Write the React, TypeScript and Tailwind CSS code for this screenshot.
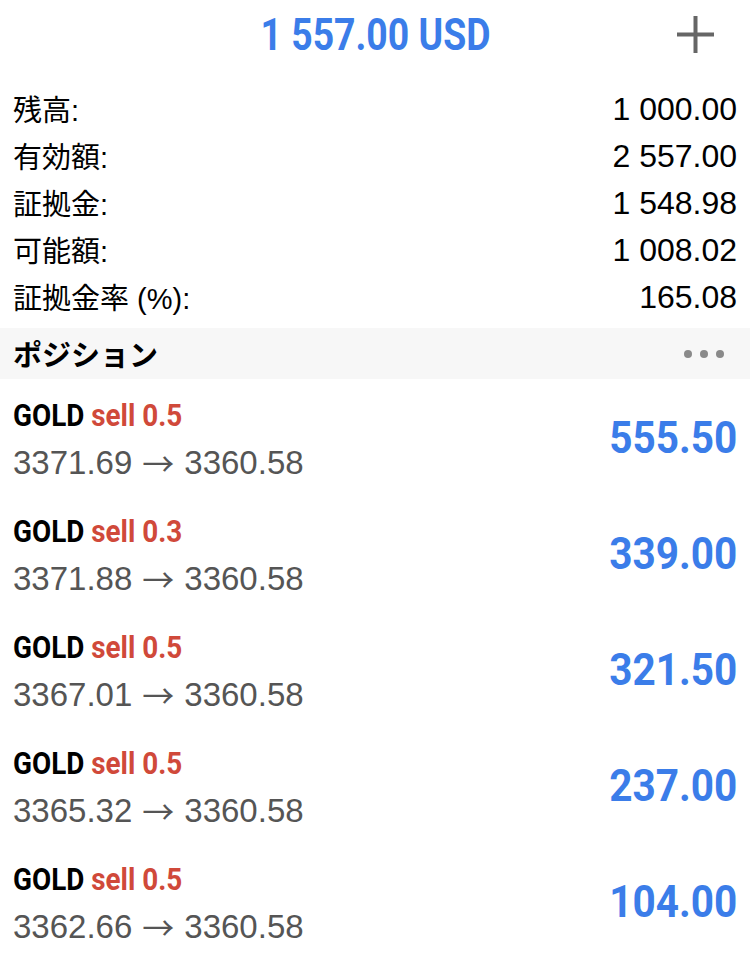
import { FunctionComponent } from "react";

const jp = "font-['Liberation_Sans','Noto_Sans_CJK_JP',sans-serif]";
const num = "font-['Liberation_Sans','Noto_Sans',sans-serif]";
const cond = "font-['Roboto','Liberation_Sans',sans-serif] font-bold";

const account = [
  { label: "残高:", value: "1 000.00" },
  { label: "有効額:", value: "2 557.00" },
  { label: "証拠金:", value: "1 548.98" },
  { label: "可能額:", value: "1 008.02" },
  { label: "証拠金率 (%):", value: "165.08" },
];

const positions = [
  { lots: "0.5", open: "3371.69", price: "3360.58", profit: "555.50" },
  { lots: "0.3", open: "3371.88", price: "3360.58", profit: "339.00" },
  { lots: "0.5", open: "3367.01", price: "3360.58", profit: "321.50" },
  { lots: "0.5", open: "3365.32", price: "3360.58", profit: "237.00" },
  { lots: "0.5", open: "3362.66", price: "3360.58", profit: "104.00" },
];

const App: FunctionComponent = () => {
  return (
    <div className="w-[750px] h-[959px] bg-white overflow-hidden text-black">
      <header className="h-[68px] grid grid-cols-[1fr_auto_1fr] items-center px-[13px]">
        <div />
        <div
          className={`${cond} text-[45px] leading-none text-[#3b7de9] inline-block scale-x-[0.83] origin-center whitespace-nowrap`}
        >
          1 557.00 USD
        </div>
        <div className="flex justify-end pr-[23px]">
          <svg width="37" height="37" viewBox="0 0 37 37">
            <rect x="16.5" y="0" width="4" height="37" fill="#666666" />
            <rect x="0" y="16.5" width="37" height="4" fill="#666666" />
          </svg>
        </div>
      </header>

      <section className="pt-[17px] pb-[8px] px-[13px]">
        {account.map((row) => (
          <div key={row.label} className="h-[47px] flex items-center justify-between">
            <span className={`${jp} text-[29px] leading-none pt-[6px]`}>{row.label}</span>
            <span className={`${num} text-[32px] leading-none`}>{row.value}</span>
          </div>
        ))}
      </section>

      <div className="h-[51px] bg-[#f7f7f7] flex items-center justify-between pl-[13px] pr-[26px]">
        <span className="font-['Noto_Sans_CJK_JP',sans-serif] text-[29px] font-bold leading-none">
          ポジション
        </span>
        <div className="flex gap-[8px]">
          <span className="w-[8px] h-[8px] rounded-full bg-[#8a8a8a]" />
          <span className="w-[8px] h-[8px] rounded-full bg-[#8a8a8a]" />
          <span className="w-[8px] h-[8px] rounded-full bg-[#8a8a8a]" />
        </div>
      </div>

      <ul>
        {positions.map((p, i) => (
          <li key={i} className="h-[116px] flex items-center justify-between px-[13px]">
            <div className="flex flex-col self-stretch pt-[18px]">
              <div
                className={`${cond} text-[32px] leading-[36px] h-[36px] inline-block scale-x-[0.87] origin-left whitespace-nowrap`}
              >
                GOLD <span className="text-[#d0493a]">sell {p.lots}</span>
              </div>
              <div
                className={`${num} mt-[10px] text-[33px] leading-[40px] text-[#555555] whitespace-nowrap flex items-center`}
              >
                {p.open}
                <span className="font-['Noto_Sans_CJK_JP',sans-serif] text-[32px] leading-none mx-[10px] -mt-[2px]">
                  →
                </span>
                {p.price}
              </div>
            </div>
            <div
              className={`${cond} text-[45px] leading-none text-[#3b7de9] inline-block scale-x-[0.9] origin-right`}
            >
              {p.profit}
            </div>
          </li>
        ))}
      </ul>
    </div>
  );
};

export default App;
